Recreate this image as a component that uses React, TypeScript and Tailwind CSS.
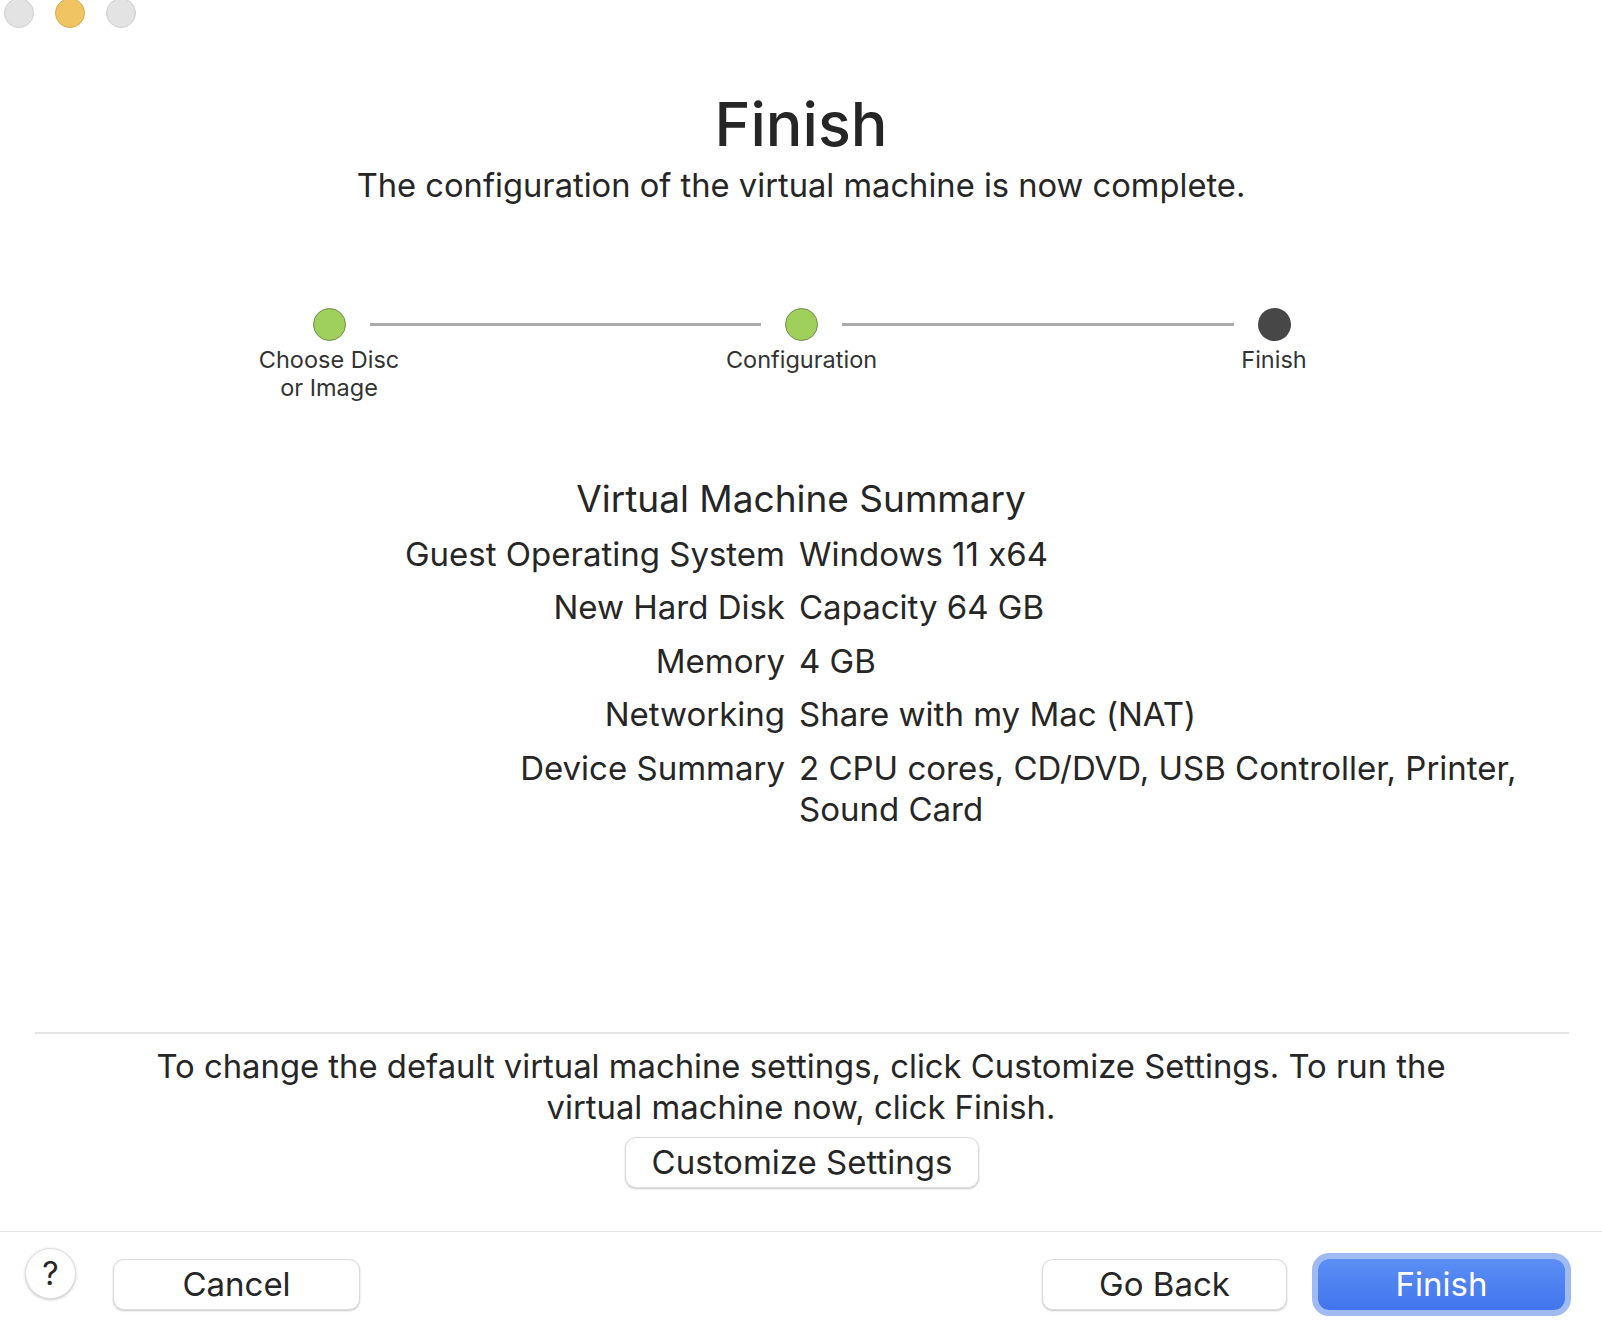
import React from 'react';

const font = { fontFamily: 'Inter, "Noto Sans", sans-serif' };

const summaryRows: { label: string; value: string }[] = [
  { label: 'Guest Operating System', value: 'Windows 11 x64' },
  { label: 'New Hard Disk', value: 'Capacity 64 GB' },
  { label: 'Memory', value: '4 GB' },
  { label: 'Networking', value: 'Share with my Mac (NAT)' },
  { label: 'Device Summary', value: '2 CPU cores, CD/DVD, USB Controller, Printer, Sound Card' },
];

const Step: React.FC<{ done?: boolean; label: React.ReactNode }> = ({ done, label }) => (
  <div className="flex w-[33px] flex-col items-center">
    <div
      className={
        done
          ? 'h-[33px] w-[33px] rounded-full border border-[#6f8f4a] bg-[#9fd05c]'
          : 'h-[33px] w-[33px] rounded-full bg-[#474747]'
      }
    />
    <div className="mt-[5px] whitespace-nowrap text-center text-[23.5px] leading-[28px] text-[#333333]">{label}</div>
  </div>
);

const Line = () => <div className="mx-6 mt-[15px] h-[3px] flex-1 bg-[#ababab]" />;

const MacButton: React.FC<{ children: React.ReactNode; className?: string }> = ({ children, className }) => (
  <button
    className={`flex h-[51px] items-center justify-center rounded-[11px] border border-[#dcdcdc] bg-white text-[33px] text-[#262626] shadow-[0_1px_2px_rgba(0,0,0,0.22)] ${className ?? ''}`}
  >
    {children}
  </button>
);

export default function App() {
  return (
    <div
      className="flex h-[1328px] w-full flex-col overflow-hidden bg-white text-[#262626] [font-feature-settings:'calt'_0]"
      style={font}
    >
      {/* window controls */}
      <div className="-mt-[2px] flex h-[30px] gap-[21px] pl-[4px]">
        <div className="h-[30px] w-[30px] rounded-full border border-[#cfcfcf] bg-[#e3e3e3]" />
        <div className="h-[30px] w-[30px] rounded-full border border-[#d7a94a] bg-[#f0c462]" />
        <div className="h-[30px] w-[30px] rounded-full border border-[#cfcfcf] bg-[#e3e3e3]" />
      </div>

      <h1 className="mt-[64px] text-center text-[61px] font-medium leading-[64px]">Finish</h1>
      <p className="mt-[9px] text-center text-[32.7px] leading-[40px]">
        The configuration of the virtual machine is now complete.
      </p>

      {/* stepper */}
      <div className="mx-auto mt-[103px] flex w-[979px] items-start pl-[1px]">
        <Step
          done
          label={
            <>
              Choose Disc
              <br />
              or Image
            </>
          }
        />
        <Line />
        <Step done label="Configuration" />
        <Line />
        <Step label="Finish" />
      </div>

      {/* summary */}
      <div className="mt-[75px] flex flex-col gap-y-[12.5px]">
        <h2 className="text-center text-[37px] leading-[44px]">Virtual Machine Summary</h2>
        {summaryRows.map((row) => (
          <div key={row.label} className="grid grid-cols-[785px_1fr] gap-x-[14px] text-[33px] leading-[41px]">
            <div className="whitespace-nowrap text-right">{row.label}</div>
            <div className="pr-[60px]">{row.value}</div>
          </div>
        ))}
      </div>

      <div className="flex-1" />

      {/* bottom note */}
      <div className="ml-[35px] mr-[33px] h-[2px] bg-[#e6e6e6]" />
      <p className="mx-auto mt-[11.5px] max-w-[1380px] text-center text-[32.8px] leading-[41px]">
        To change the default virtual machine settings, click Customize Settings. To run the virtual machine now, click
        Finish.
      </p>
      <div className="mt-[9.5px] flex justify-center pl-[2px]">
        <MacButton className="w-[354px]">Customize Settings</MacButton>
      </div>

      <div className="mt-[43px] h-px bg-[#e3e3e3]" />

      {/* footer */}
      <div className="flex h-[96px] items-start pl-[25px] pr-[37px]">
        <button className="mt-[16px] flex h-[51px] w-[51px] items-center justify-center rounded-full border border-[#dcdcdc] bg-white text-[32px] text-[#262626] shadow-[0_1px_3px_rgba(0,0,0,0.22)]">
          ?
        </button>
        <MacButton className="ml-[37px] mt-[27px] w-[247px]">Cancel</MacButton>
        <div className="flex-1" />
        <MacButton className="mt-[27px] w-[245px]">Go Back</MacButton>
        <button className="ml-[31px] mt-[27px] flex h-[51px] w-[247px] items-center justify-center rounded-[11px] bg-gradient-to-b from-[#5b8ff5] to-[#4274ec] text-[33px] text-white shadow-[0_0_0_6px_rgba(96,140,235,0.6)]">
          Finish
        </button>
      </div>
    </div>
  );
}
